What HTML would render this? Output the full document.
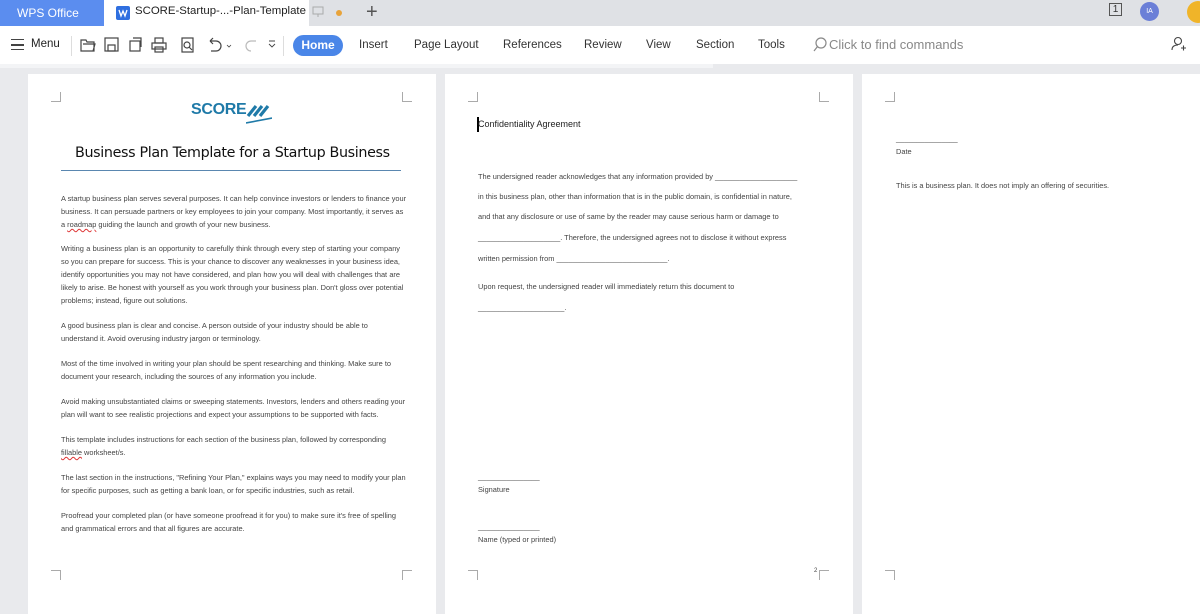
<!DOCTYPE html>
<html><head><meta charset="utf-8"><style>
*{margin:0;padding:0;box-sizing:border-box}
body{width:1200px;height:600px;overflow:hidden;background:#e9eaed;font-family:"Liberation Sans",sans-serif;position:relative}
.a{position:absolute;white-space:nowrap}
.tabbar{position:absolute;left:0;top:0;width:1200px;height:26px;background:#dfe1e5}
.tb{position:absolute;left:0;top:26px;width:1200px;height:38px;background:#fff}
.band{position:absolute;left:0;top:64px;width:713px;height:4px;background:#f3f4f6}
.page{position:absolute;top:74px;height:540px;background:#fff}
.c{position:absolute;width:10px;height:10px;border-color:#aaa;border-style:solid;border-width:0}
.l{position:absolute;font-size:7.4px;color:#444;white-space:nowrap;text-align:justify;text-align-last:justify;line-height:9px}
.ll{text-align-last:left}
</style></head><body>
<div class="tabbar"></div>
<div class="a" style="left:0;top:0;width:104px;height:26px;background:#5b8def;color:#fff;font-size:12px;line-height:26px;padding-left:17px">WPS Office</div>
<div class="a" style="left:104px;top:0;width:205px;height:26px;background:#fff"></div>
<svg class="a" style="left:116px;top:6px" width="14" height="14"><rect width="14" height="14" rx="2" fill="#2f6fe0"/><path d="M3 4l2 6 2-5 2 5 2-6" stroke="#fff" stroke-width="1.3" fill="none"/></svg>
<div class="a" style="left:135px;top:5px;font-size:11.4px;color:#222">SCORE-Startup-...-Plan-Template</div>
<svg class="a" style="left:312px;top:6px" width="12" height="12"><rect x="1" y="1" width="10" height="7" fill="none" stroke="#aaa"/><path d="M6 8v3" stroke="#aaa"/></svg>
<div class="a" style="left:336px;top:10px;width:6px;height:6px;border-radius:3px;background:#e8a33a"></div>
<div class="a" style="left:366px;top:0;font-size:20px;color:#555;line-height:24px">+</div>
<div class="a" style="left:1109px;top:3px;width:13px;height:13px;border:1px solid #555;font-size:10px;line-height:11px;text-align:center;color:#333">1</div>
<div class="a" style="left:1140px;top:2px;width:19px;height:19px;border-radius:10px;background:#6b7fd7;color:#fff;font-size:7px;line-height:19px;text-align:center">IA</div>
<div class="a" style="left:1187px;top:1px;width:22px;height:22px;border-radius:11px;background:#f0b429"></div>
<div class="tb"></div>
<div class="a" style="left:11px;top:39px;width:13px;height:11px;border-top:1.5px solid #444;border-bottom:1.5px solid #444"></div>
<div class="a" style="left:11px;top:44px;width:13px;height:1.5px;background:#444"></div>
<div class="a" style="left:31px;top:38px;font-size:11.5px;color:#222">Menu</div>
<div class="a" style="left:71px;top:36px;width:1px;height:20px;background:#ddd"></div>
<svg class="a" style="left:80px;top:36px" width="200" height="18" fill="none" stroke="#444" stroke-width="1.2">
<path d="M1 4h5l1 2h7v9H1z M3 8h12l-2 7"/>
<rect x="25" y="2" width="13" height="13"/><rect x="28" y="9" width="7" height="6"/>
<rect x="50" y="5" width="10" height="10"/><path d="M53 2h8v9"/>
<rect x="72" y="7" width="14" height="6"/><rect x="75" y="2" width="8" height="5"/><rect x="75" y="11" width="8" height="5"/>
<rect x="102" y="2" width="11" height="14"/><circle cx="107" cy="9" r="3"/><path d="M109 11l3 3"/>
<path d="M130 5h6a5 5 0 010 10h-5 M130 5l3-3 M130 5l3 3"/>
<path d="M147 9l2 2 2-2" stroke-width="0.8"/>
<path d="M176 5h-5a5 5 0 000 10" stroke="#bbb"/>
<path d="M189 8l3 3 3-3 M189 5h6" stroke-width="0.9"/>
</svg>
<div class="a" style="left:283px;top:36px;width:1px;height:20px;background:#ddd"></div>
<div class="a" style="left:293px;top:35px;width:50px;height:21px;border-radius:11px;background:#4a86e8;color:#fff;font-size:12px;font-weight:bold;line-height:21px;text-align:center">Home</div>
<div class="a" style="left:359px;top:39px;font-size:11.5px;color:#333">Insert</div>
<div class="a" style="left:414px;top:39px;font-size:11.5px;color:#333">Page Layout</div>
<div class="a" style="left:503px;top:39px;font-size:11.5px;color:#333">References</div>
<div class="a" style="left:584px;top:39px;font-size:11.5px;color:#333">Review</div>
<div class="a" style="left:646px;top:39px;font-size:11.5px;color:#333">View</div>
<div class="a" style="left:696px;top:39px;font-size:11.5px;color:#333">Section</div>
<div class="a" style="left:758px;top:39px;font-size:11.5px;color:#333">Tools</div>
<svg class="a" style="left:812px;top:37px" width="16" height="16" fill="none" stroke="#888" stroke-width="1.2"><circle cx="9" cy="6" r="5"/><path d="M5.5 9.5L2 14"/></svg>
<div class="a" style="left:829px;top:37px;font-size:13px;color:#888">Click to find commands</div>
<svg class="a" style="left:1171px;top:36px" width="16" height="16" fill="none" stroke="#444" stroke-width="1.1"><circle cx="7" cy="5" r="3.5"/><path d="M1 14c0-4 3-5 6-5 M10 12h5 M12.5 9.5v5"/></svg>
<div class="band"></div>

<div class="page" style="left:28px;width:408px"></div>
<div class="page" style="left:445px;width:408px"></div>
<div class="page" style="left:862px;width:350px"></div>
<div class="c" style="left:51px;top:92px;border-right-width:1px;border-bottom-width:1px"></div>
<div class="c" style="left:402px;top:92px;border-left-width:1px;border-bottom-width:1px"></div>
<div class="c" style="left:51px;top:570px;border-right-width:1px;border-top-width:1px"></div>
<div class="c" style="left:402px;top:570px;border-left-width:1px;border-top-width:1px"></div>
<div class="c" style="left:468px;top:92px;border-right-width:1px;border-bottom-width:1px"></div>
<div class="c" style="left:819px;top:92px;border-left-width:1px;border-bottom-width:1px"></div>
<div class="c" style="left:468px;top:570px;border-right-width:1px;border-top-width:1px"></div>
<div class="c" style="left:819px;top:570px;border-left-width:1px;border-top-width:1px"></div>
<div class="c" style="left:885px;top:92px;border-right-width:1px;border-bottom-width:1px"></div>
<div class="c" style="left:885px;top:570px;border-right-width:1px;border-top-width:1px"></div>

<div class="a" style="left:191px;top:101px;font-size:16px;font-weight:bold;color:#1f7aa8;letter-spacing:-0.3px">SCORE</div>
<svg class="a" style="left:246px;top:102px" width="26" height="22"><path d="M2 14L10 4M8 14L16 4M14 14L22 4" stroke="#1f7aa8" stroke-width="3.2"/><path d="M0 21L26 16" stroke="#1f7aa8" stroke-width="1.6"/></svg>
<div class="a" style="left:75px;top:145px;font-size:14.3px;color:#111;font-family:'DejaVu Sans',sans-serif;letter-spacing:-0.35px">Business Plan Template for a Startup Business</div>
<div class="a" style="left:61px;top:170px;width:340px;height:1px;background:#5a87b0"></div>

<div class="l" style="left:61px;top:194px;width:339px">A startup business plan serves several purposes. It can help convince investors or lenders to finance your</div>
<div class="l" style="left:61px;top:207px;width:339px">business. It can persuade partners or key employees to join your company. Most importantly, it serves as</div>
<div class="l ll" style="left:61px;top:220px">a <u style="text-decoration-color:#d33;text-decoration-style:wavy">roadmap</u> guiding the launch and growth of your new business.</div>
<div class="l" style="left:61px;top:244px;width:339px">Writing a business plan is an opportunity to carefully think through every step of starting your company</div>
<div class="l" style="left:61px;top:257px;width:339px">so you can prepare for success. This is your chance to discover any weaknesses in your business idea,</div>
<div class="l" style="left:61px;top:270px;width:339px">identify opportunities you may not have considered, and plan how you will deal with challenges that are</div>
<div class="l" style="left:61px;top:283px;width:339px">likely to arise. Be honest with yourself as you work through your business plan. Don't gloss over potential</div>
<div class="l ll" style="left:61px;top:296px">problems; instead, figure out solutions.</div>
<div class="l" style="left:61px;top:321px;width:304px">A good business plan is clear and concise. A person outside of your industry should be able to</div>
<div class="l ll" style="left:61px;top:334px">understand it. Avoid overusing industry jargon or terminology.</div>
<div class="l" style="left:61px;top:359px;width:330px">Most of the time involved in writing your plan should be spent researching and thinking. Make sure to</div>
<div class="l ll" style="left:61px;top:372px">document your research, including the sources of any information you include.</div>
<div class="l" style="left:61px;top:397px;width:339px">Avoid making unsubstantiated claims or sweeping statements. Investors, lenders and others reading your</div>
<div class="l ll" style="left:61px;top:410px">plan will want to see realistic projections and expect your assumptions to be supported with facts.</div>
<div class="l" style="left:61px;top:435px;width:321px">This template includes instructions for each section of the business plan, followed by corresponding</div>
<div class="l ll" style="left:61px;top:448px"><u style="text-decoration-color:#d33;text-decoration-style:wavy">fillable</u> worksheet/s.</div>
<div class="l" style="left:61px;top:473px;width:339px">The last section in the instructions, "Refining Your Plan," explains ways you may need to modify your plan</div>
<div class="l ll" style="left:61px;top:486px">for specific purposes, such as getting a bank loan, or for specific industries, such as retail.</div>
<div class="l" style="left:61px;top:511px;width:334px">Proofread your completed plan (or have someone proofread it for you) to make sure it's free of spelling</div>
<div class="l ll" style="left:61px;top:524px">and grammatical errors and that all figures are accurate.</div>

<div class="a" style="left:477px;top:117px;width:2px;height:15px;background:#000"></div>
<div class="l ll" style="left:478px;top:120px;font-size:9px;color:#222">Confidentiality Agreement</div>
<div class="l ll" style="left:478px;top:172px">The undersigned reader acknowledges that any information provided by ____________________</div>
<div class="l ll" style="left:478px;top:192px">in this business plan, other than information that is in the public domain, is confidential in nature,</div>
<div class="l ll" style="left:478px;top:212px">and that any disclosure or use of same by the reader may cause serious harm or damage to</div>
<div class="l ll" style="left:478px;top:233px">____________________. Therefore, the undersigned agrees not to disclose it without express</div>
<div class="l ll" style="left:478px;top:254px">written permission from ___________________________.</div>
<div class="l ll" style="left:478px;top:282px">Upon request, the undersigned reader will immediately return this document to</div>
<div class="l ll" style="left:478px;top:303px">_____________________.</div>
<div class="l ll" style="left:478px;top:472px">_______________</div>
<div class="l ll" style="left:478px;top:485px">Signature</div>
<div class="l ll" style="left:478px;top:522px">_______________</div>
<div class="l ll" style="left:478px;top:535px">Name (typed or printed)</div>
<div class="l ll" style="left:814px;top:567px;font-size:6px">2</div>

<div class="l ll" style="left:896px;top:134px">_______________</div>
<div class="l ll" style="left:896px;top:147px">Date</div>
<div class="l ll" style="left:896px;top:181px">This is a business plan. It does not imply an offering of securities.</div>
</body></html>
